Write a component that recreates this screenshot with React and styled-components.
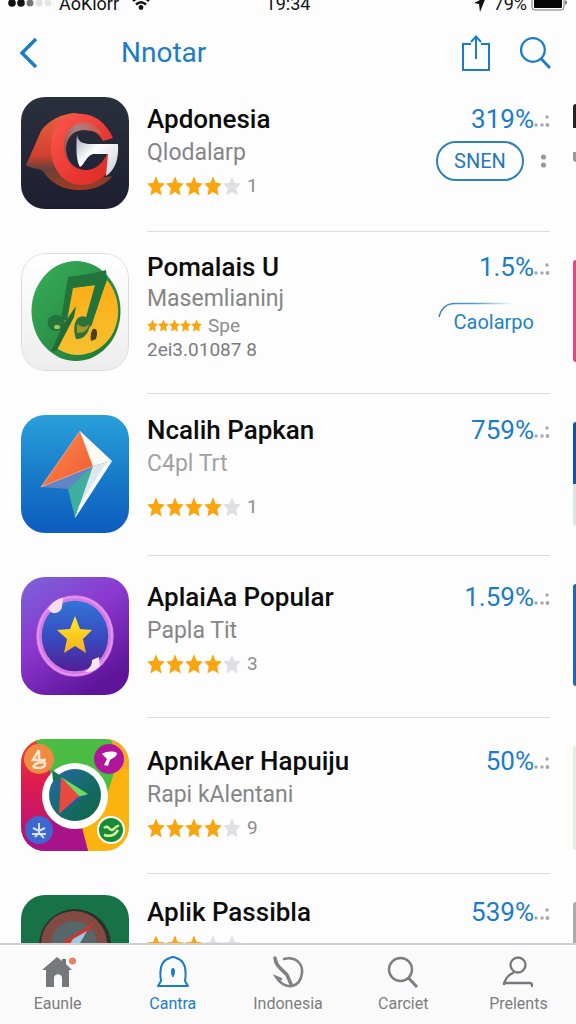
import React from 'react'
import styled, { createGlobalStyle } from 'styled-components'

const GlobalStyle = createGlobalStyle`
    * {
        box-sizing: border-box;
    }
    body {
        margin: 0;
        background-color: #fdfdfd;
        font-family: Roboto, "Liberation Sans", sans-serif;
    }
    button {
        font-family: inherit;
        background: none;
        border: none;
        padding: 0;
        cursor: pointer;
    }
`

const Screen = styled.div`
    display: flex;
    flex-direction: column;
    height: 100vh;
    overflow: hidden;
`

const StatusBar = styled.div`
    display: grid;
    grid-template-columns: 1fr auto 1fr;
    grid-template-rows: 12px;
    align-items: end;
    flex-shrink: 0;
    padding: 0 8px;
    font-size: 18px;
    line-height: 16px;
    color: #111;
`

const StatusGroup = styled.div`
    display: flex;
    align-items: flex-end;
    justify-content: ${props => props.$end ? "flex-end" : "flex-start"};
    gap: ${props => props.$end ? "4px" : "6px"};
`

const Header = styled.header`
    display: flex;
    align-items: center;
    flex-shrink: 0;
    height: 64px;
    padding: 17px 24px 0 18px;
    color: #1b7cc8;
`

const Heading = styled.h1`
    flex: 1;
    margin: 0 0 0 81px;
    font-size: 28px;
    font-weight: 400;
    line-height: 32px;
`

const IconButton = styled.button`
    display: flex;
    margin-left: ${props => props.$spaced ? "28px" : "0"};
    color: inherit;
`

const List = styled.main`
    flex: 1;
    min-height: 0;
    overflow: hidden;
`

const Row = styled.article`
    display: flex;
    padding-left: 21px;
`

const Artwork = styled.div`
    flex-shrink: 0;
    width: 108px;
    height: ${props => props.$height}px;
    margin: 21px 18px 23px 0;
    border-radius: 24px;
    overflow: hidden;

    svg {
        display: block;
        width: 100%;
        height: 100%;
    }
`

const Body = styled.div`
    display: flex;
    flex: 1;
    align-items: ${props => props.$top ? "flex-start" : "center"};
    padding: ${props => props.$top ? "21px 0" : "14px 0"};
    border-bottom: 1px solid #dcdcde;
`

const Content = styled.div`
    display: flex;
    flex: 1;
    align-items: flex-start;
    justify-content: space-between;
`

const Info = styled.div`
    padding-bottom: ${props => props.$tall ? "14px" : "4px"};
`

const Name = styled.h2`
    margin: 0;
    font-size: 26px;
    font-weight: 500;
    line-height: 34px;
    color: #0c0c0c;
    white-space: nowrap;
`

const Maker = styled.p`
    margin: 0 0 ${props => props.$loose ? "10px" : "0"};
    font-size: 23px;
    line-height: ${props => props.$compact ? "30px" : "34px"};
    color: ${props => props.$light ? "#a2a2a4" : "#858587"};
    white-space: nowrap;
`

const Rating = styled.div`
    display: flex;
    align-items: center;
    gap: 6px;
    height: ${props => props.$compact ? "24px" : "32px"};
    font-size: 19px;
    color: #8e8e90;
`

const Stars = styled.div`
    display: flex;
    gap: ${props => props.$compact ? "0" : "1px"};
`

const Meta = styled.p`
    margin: 0;
    font-size: 19px;
    line-height: 24px;
    color: #7c7c7e;
`

const Side = styled.div`
    display: flex;
    flex-direction: column;
    align-items: flex-end;
`

const Percent = styled.div`
    display: flex;
    align-items: center;
    height: 34px;
    font-size: 26px;
    color: #1b7cc8;
`

const Actions = styled.div`
    display: flex;
    align-items: center;
    gap: 16px;
    margin-top: 5px;
    padding-right: 3px;
`

const PillButton = styled.button`
    width: 88px;
    height: 40px;
    border: 2px solid #2f80bd;
    border-radius: 20px;
    font-size: 20px;
    color: #2878b8;
`

const TextButton = styled.button`
    position: relative;
    margin-top: 18px;
    padding: 8px 16px;
    font-size: 20px;
    line-height: 24px;
    color: #2582c0;
`

const Arc = styled.svg`
    position: absolute;
    top: 0;
    left: 0;
`

const Peek = styled.div`
    align-self: flex-start;
    flex-shrink: 0;
    width: 3px;
    height: ${props => props.$height}px;
    margin: 28px 0 0 23px;
    border-radius: 3px 0 0 3px;
    background: ${props => props.$fill};
`

const TabBar = styled.nav`
    display: flex;
    flex-shrink: 0;
    height: 81px;
    padding-top: 11px;
    border-top: 2px solid #cfcfd1;
    background-color: #fafafb;
`

const Tab = styled.a`
    display: flex;
    flex: 1;
    flex-direction: column;
    align-items: center;
    gap: 4px;
    font-size: 16px;
    line-height: 24px;
    text-decoration: none;
    color: ${props => props.$active ? "#1b7cc8" : "#7d7d80"};
`

const STAR = "M10 0.3 L12.9 6.7 L19.8 7.5 L14.7 12.3 L16.2 19.6 L10 16 L3.8 19.6 L5.3 12.3 L0.2 7.5 L7.1 6.7 Z"

const Star = ({ size, color }) => (
    <svg width={size} height={size + 2} viewBox="0 0 20 20" preserveAspectRatio="none">
        <path d={STAR} fill={color} />
    </svg>
)

const MoreDots = () => (
    <svg width="16" height="20" viewBox="0 0 16 20" fill="#a5a8ac" aria-hidden="true">
        <circle cx="13" cy="8" r="1.7" />
        <circle cx="2" cy="16" r="1.7" />
        <circle cx="8" cy="16" r="1.7" />
        <circle cx="13.5" cy="16" r="1.9" />
    </svg>
)

const LetterArt = () => (
    <svg viewBox="0 0 108 112" preserveAspectRatio="none">
        <defs>
            <linearGradient id="nightBg" x1="0" y1="0" x2="0" y2="1">
                <stop offset="0" stopColor="#2b303d" />
                <stop offset="1" stopColor="#1d1f30" />
            </linearGradient>
            <linearGradient id="tail" x1="0" y1="0" x2="0" y2="1">
                <stop offset="0" stopColor="#e8623f" />
                <stop offset="0.55" stopColor="#d3402f" />
                <stop offset="0.72" stopColor="#6a4038" />
                <stop offset="1" stopColor="#a13b22" />
            </linearGradient>
            <linearGradient id="ring" x1="0" y1="0" x2="1" y2="1">
                <stop offset="0" stopColor="#fb5a50" />
                <stop offset="0.6" stopColor="#e93731" />
                <stop offset="1" stopColor="#d82a22" />
            </linearGradient>
            <linearGradient id="lip" x1="0" y1="1" x2="1" y2="0">
                <stop offset="0" stopColor="#8d3a40" />
                <stop offset="0.6" stopColor="#a8807f" />
                <stop offset="1" stopColor="#e0493c" />
            </linearGradient>
            <linearGradient id="blade" x1="0" y1="0" x2="1" y2="1">
                <stop offset="0" stopColor="#a9aebb" />
                <stop offset="0.4" stopColor="#ffffff" />
                <stop offset="1" stopColor="#c9cdd8" />
            </linearGradient>
        </defs>
        <rect width="108" height="112" fill="url(#nightBg)" />
        <path d="M57 16 C40 16 27 24 20 34 L5 68 C10 72 17 71 22 74 C29 86 42 93 59 93 C74 93 86 87 91 79 L60 84 L34 60 L34 34 Z" fill="url(#tail)" />
        <path d="M92 41 C84 23 70 15 54 17 C38 20 29 34 30 52 C31 74 43 87 60 88 C77 88 91 77 94 58 L86 57 C82 66 74 74 63 73 C53 72 45 64 45 52 C45 41 52 33 63 33 C72 33 78 36 82 44 Z" fill="url(#ring)" />
        <path d="M82 38 C76 29 70 25 62 25 C50 27 43 37 43 49 C43 60 48 68 55 71 C48 66 45 60 45 52 C45 41 52 33 63 33 C72 33 78 36 82 38 Z" fill="url(#lip)" />
        <path d="M56 38 C57 45 62 47 70 47 L97 47 C98 62 94 73 85 79 L87 57 L72 57 C65 59 64 67 59 70 C55 65 55 48 56 38 Z" fill="url(#blade)" />
    </svg>
)

const MusicArt = () => (
    <svg viewBox="0 0 108 118" preserveAspectRatio="none">
        <defs>
            <linearGradient id="leaf" x1="0" y1="0" x2="1" y2="1">
                <stop offset="0" stopColor="#38b05a" />
                <stop offset="1" stopColor="#1f7436" />
            </linearGradient>
            <linearGradient id="amber" x1="0" y1="0" x2="0" y2="1">
                <stop offset="0" stopColor="#fbae17" />
                <stop offset="1" stopColor="#f6c02e" />
            </linearGradient>
            <linearGradient id="paper" x1="0" y1="0" x2="0" y2="1">
                <stop offset="0" stopColor="#ffffff" />
                <stop offset="1" stopColor="#ededee" />
            </linearGradient>
        </defs>
        <rect x="0.5" y="0.5" width="107" height="117" rx="24" fill="url(#paper)" stroke="#dcdcdc" />
        <ellipse cx="55" cy="58" rx="44.500" ry="50" fill="url(#leaf)" />
        <path d="M86 27 C94 37 98 49 97 62 C95 86 77 102 56 102 C49 102 41 99 36 95 L56 62 L70 68 Z" fill="url(#amber)" />
        <path d="M50 35 L75 32 L66 66 L40 90 Z" fill="url(#amber)" />
        <path d="M47 24 L74 20 L85 17 L86 26 L70 74 L64 68 L74 32 L52 35 L46 68 L40 66 Z" fill="#23743a" />
        <ellipse cx="35" cy="70" rx="8.500" ry="8" fill="#24733a" />
        <path d="M55 53 L53 64 L36 97 L30 99 L42 72 Z" fill="#226b36" />
        <path d="M56 66 C61 60 70 64 69 73 C67 81 62 87 55 86 C53 80 52 72 56 66 Z" fill="#2b7339" />
        <path d="M56 71 C61 75 66 74 68 71 C67 77 63 80 56 80 Z" fill="#a8962c" />
        <ellipse cx="36" cy="74" rx="3" ry="2" fill="#a4c764" />
        <path d="M72 76 C76 75 77 79 75 86 L70 88 C69 84 70 78 72 76 Z" fill="#493e16" />
    </svg>
)

const KiteArt = () => (
    <svg viewBox="0 0 108 118" preserveAspectRatio="none">
        <defs>
            <linearGradient id="sky" x1="0" y1="0" x2="0" y2="1">
                <stop offset="0" stopColor="#2aa0da" />
                <stop offset="0.5" stopColor="#187cca" />
                <stop offset="1" stopColor="#0d5cbe" />
            </linearGradient>
            <linearGradient id="orangeFold" x1="0" y1="0" x2="1" y2="1">
                <stop offset="0" stopColor="#ff8a52" />
                <stop offset="1" stopColor="#ef5a2c" />
            </linearGradient>
        </defs>
        <rect width="108" height="118" fill="url(#sky)" />
        <path d="M20 72 L72 51 L65 66 L47 74 Z" fill="#6186c4" />
        <path d="M59 16 L20 72 L72 51 Z" fill="url(#orangeFold)" stroke="#f0b48e" strokeWidth="0.8" />
        <path d="M72 51 L47 74 L54 103 Z" fill="#3daf9c" />
        <path d="M59 16 L91 46 L72 51 Z" fill="#fdfaf4" />
        <path d="M72 51 L91 46 L54 103 Z" fill="#dce8ea" />
        <path d="M91 46 L54 103 L58 91 L85 48 Z" fill="#f7fbfb" />
    </svg>
)

const StarArt = () => (
    <svg viewBox="0 0 108 118" preserveAspectRatio="none">
        <defs>
            <linearGradient id="violet" x1="0" y1="0" x2="0.6" y2="1">
                <stop offset="0" stopColor="#7b64dc" />
                <stop offset="0.5" stopColor="#8b37cd" />
                <stop offset="1" stopColor="#5f149b" />
            </linearGradient>
            <linearGradient id="orb" x1="0" y1="0" x2="0" y2="1">
                <stop offset="0" stopColor="#3178d8" />
                <stop offset="0.55" stopColor="#3948bd" />
                <stop offset="1" stopColor="#551c91" />
            </linearGradient>
            <linearGradient id="gold" x1="0" y1="0" x2="0" y2="1">
                <stop offset="0" stopColor="#ffee22" />
                <stop offset="1" stopColor="#f6ad20" />
            </linearGradient>
        </defs>
        <rect width="108" height="118" fill="url(#violet)" />
        <ellipse cx="54" cy="59" rx="36" ry="38" fill="url(#orb)" stroke="#d579e6" strokeWidth="5.500" />
        <ellipse cx="54" cy="59" rx="37" ry="39" fill="none" stroke="#e294ec" strokeWidth="2" />
        <path d="M27 32 C31 25 37 21 42 21 C41 29 42 35 34 36 C31 37 29 34 27 32 Z" fill="#fbdcf8" />
        <path d="M71 83 L78 80 L79 89 C74 94 69 95 64 95 C69 91 71 88 71 83 Z" fill="#fce5fb" />
        <path d="M54 39 L59 52 L71 53 L62 62 L65 76 L54 69 L43 76 L46 62 L36 53 L49 52 Z" fill="url(#gold)" />
    </svg>
)

const PlayArt = () => (
    <svg viewBox="0 0 108 112" preserveAspectRatio="none">
        <defs>
            <linearGradient id="crimson" x1="0" y1="0" x2="0" y2="1">
                <stop offset="0" stopColor="#e8442d" />
                <stop offset="0.4" stopColor="#dd1b50" />
                <stop offset="1" stopColor="#b0127f" />
            </linearGradient>
            <linearGradient id="lens" x1="0" y1="0" x2="1" y2="1">
                <stop offset="0" stopColor="#2766ab" />
                <stop offset="0.5" stopColor="#176b6c" />
                <stop offset="1" stopColor="#0e6445" />
            </linearGradient>
        </defs>
        <rect width="108" height="112" fill="#fbb40f" />
        <path d="M0 0 H40 L54 60 L67 112 H0 Z" fill="url(#crimson)" />
        <path d="M14 0 H104 L84 62 L40 56 Z" fill="#4bbd42" />
        <path d="M0 112 L10 86 L56 78 L67 112 Z" fill="#a91389" />
        <path d="M90 0 H108 V30 H98 Z" fill="#fba526" />
        <circle cx="54" cy="57" r="33" fill="#fff" />
        <circle cx="54" cy="56" r="26" fill="url(#lens)" />
        <path d="M31 31 L43 39 L32 42 Z" fill="#167658" />
        <path d="M40 38 L60 56 L38 75 Z" fill="#e84b3d" />
        <path d="M40 38 L67 55 L59 58 Z" fill="#68df62" />
        <path d="M38 75 L63 56 L57 58 Z" fill="#2c55b8" />
        <circle cx="18" cy="20" r="15" fill="#f18a43" />
        <path d="M18 11 V22 M18 11 L12 21 H25 M12 28 C18 30 25 29 24 24 C20 22 14 24 12 28" fill="none" stroke="#ffe4cc" strokeWidth="2.500" />
        <circle cx="88" cy="20" r="15" fill="#b0169b" />
        <path d="M81 15 C86 12 92 12 96 14 C96 18 91 19 89 21 L87 27 L83 26 L86 20 Z" fill="#fff" />
        <circle cx="18" cy="91" r="14" fill="#3f65cf" />
        <path d="M18 84 V95 M12 89 L18 92 L24 89 M11 95 H25 M14 98 L18 94 L23 99" fill="none" stroke="#d4e2ff" strokeWidth="2" />
        <circle cx="90" cy="91" r="14" fill="#fff" />
        <circle cx="90" cy="91" r="12" fill="#168c38" />
        <path d="M83 89 C87 85 88 91 91 91 C94 90 95 86 98 87 M83 96 C89 98 94 96 97 91" fill="none" stroke="#d9f6a0" strokeWidth="2.500" />
    </svg>
)

const CompassArt = () => (
    <svg viewBox="0 0 108 118" preserveAspectRatio="none">
        <rect width="108" height="118" fill="#177248" />
        <circle cx="54" cy="50" r="36" fill="#29302d" />
        <circle cx="53" cy="49" r="33" fill="#824b42" />
        <circle cx="53" cy="49" r="23" fill="#566669" />
        <path d="M74 27 L44 45 L34 60 H48 Z" fill="#c9392b" />
        <path d="M66 36 L52 44 L42 60 H52 Z" fill="#9bcbe4" />
    </svg>
)

const apps = [
    {
        name: "Apdonesia", maker: "Qlodalarp", stars: 4, note: "1", percent: "319%",
        art: LetterArt, height: 112, action: "pill",
        peek: { fill: "linear-gradient(#222 24px, transparent 24px 48px, #999 48px)", height: 58 },
    },
    {
        name: "Pomalais U", maker: "Masemlianinj", stars: 5, note: "Spe", meta: "2ei3.01087 8", percent: "1.5%",
        art: MusicArt, height: 118, action: "text", compact: true,
        peek: { fill: "#e6457f", height: 102 },
    },
    {
        name: "Ncalih Papkan", maker: "C4pl Trt", stars: 4, note: "1", percent: "759%",
        art: KiteArt, height: 118, light: true, loose: true,
        peek: { fill: "linear-gradient(#1253a8 62px, #dce6e8 62px)", height: 104 },
    },
    {
        name: "AplaiAa Popular", maker: "Papla Tit", stars: 4, note: "3", percent: "1.59%",
        art: StarArt, height: 118,
        peek: { fill: "#2463bc", height: 102 },
    },
    {
        name: "ApnikAer Hapuiju", maker: "Rapi kAlentani", stars: 4, note: "9", percent: "50%",
        art: PlayArt, height: 112,
        peek: { fill: "#dff0df", height: 104 },
    },
    {
        name: "Aplik Passibla", stars: 3, percent: "539%",
        art: CompassArt, height: 118, top: true,
        peek: { fill: "#aaabae", height: 104 },
    },
]

const AppRow = ({ app }) => {
    const Art = app.art
    const size = app.compact ? 11 : 18
    return (
        <Row>
            <Artwork $height={app.height}><Art /></Artwork>
            <Body $top={app.top}>
                <Content>
                    <Info $tall={app.height > 112}>
                        <Name>{app.name}</Name>
                        {app.maker && (
                            <Maker $compact={app.compact} $light={app.light} $loose={app.loose}>{app.maker}</Maker>
                        )}
                        <Rating $compact={app.compact}>
                            <Stars $compact={app.compact}>
                                {[0, 1, 2, 3, 4].map(i => (
                                    <Star key={i} size={size} color={i < app.stars ? "#faa50e" : "#dfdfe4"} />
                                ))}
                            </Stars>
                            {app.note}
                        </Rating>
                        {app.meta && <Meta>{app.meta}</Meta>}
                    </Info>
                    <Side>
                        <Percent>{app.percent}<MoreDots /></Percent>
                        {app.action === "pill" && (
                            <Actions>
                                <PillButton>SNEN</PillButton>
                                <svg width="7" height="16" viewBox="0 0 7 16" fill="#9a9a9c">
                                    <circle cx="3.500" cy="4" r="2.600" />
                                    <circle cx="3.500" cy="12" r="2.600" />
                                </svg>
                            </Actions>
                        )}
                        {app.action === "text" && (
                            <TextButton>
                                <Arc width="80" height="18" viewBox="0 0 80 18" fill="none">
                                    <defs>
                                        <linearGradient id="fade" gradientUnits="userSpaceOnUse" x1="0" y1="0" x2="76" y2="0">
                                            <stop offset="0" stopColor="#3a86bd" />
                                            <stop offset="0.5" stopColor="#5a9cc9" />
                                            <stop offset="1" stopColor="#ffffff" />
                                        </linearGradient>
                                    </defs>
                                    <path d="M1 15 C3 7 8 1.500 17 1.500 H76" stroke="url(#fade)" strokeWidth="1.500" />
                                </Arc>
                                Caolarpo
                            </TextButton>
                        )}
                    </Side>
                </Content>
            </Body>
            <Peek $fill={app.peek.fill} $height={app.peek.height} />
        </Row>
    )
}

const HomeIcon = () => (
    <svg width="36" height="32" viewBox="0 0 36 32">
        <path d="M17 1 L22 5 V3 H26 V8 L32 14 H29 V31 H22 V22 C22 17 14 17 14 22 V31 H6 V14 H2 Z" fill="#77787b" />
        <circle cx="32.500" cy="5" r="3.500" fill="#e5835b" />
    </svg>
)

const BellIcon = () => (
    <svg width="36" height="32" viewBox="0 0 36 32" fill="none" stroke="#1b7cc8" strokeWidth="2">
        <path d="M3 30 H33 L30 25 C32 12 29 4 21 2 Q18 0 15 2 C7 4 4 12 6 25 Z" strokeLinejoin="round" />
        <path d="M18 12 C15 14 17 20 18 21 C19 19 21 14 18 12 Z" fill="#1b7cc8" strokeWidth="1" />
    </svg>
)

const SwirlIcon = () => (
    <svg width="36" height="32" viewBox="0 0 36 32" fill="none" stroke="#808184" strokeWidth="2.500" strokeLinecap="round">
        <path d="M14 3 C25 0 33 7 32 17 C31 25 27 29 22 30 C15 31 10 27 6 21 L11 23" />
        <path d="M5 2 C6 11 12 13 17 19 L21 28" strokeWidth="3.500" />
    </svg>
)

const LoupeIcon = ({ size, weight }) => (
    <svg width={size} height={size} viewBox="0 0 32 32" fill="none" stroke="currentColor" strokeWidth={weight}>
        <circle cx="13.500" cy="13.500" r="11.500" />
        <path d="M21.500 22 L30 31" strokeWidth={weight + 0.5} />
    </svg>
)

const PersonIcon = () => (
    <svg width="36" height="32" viewBox="0 0 36 32" fill="none" stroke="#77787b" strokeWidth="2.300" strokeLinecap="round">
        <circle cx="18" cy="9" r="7.500" />
        <path d="M13 17 C8 19 5 23 4 29 V27 H30 Q32 27 32 30" />
    </svg>
)

const tabs = [
    { label: "Eaunle", icon: <HomeIcon /> },
    { label: "Cantra", icon: <BellIcon />, active: true },
    { label: "Indonesia", icon: <SwirlIcon /> },
    { label: "Carciet", icon: <LoupeIcon size={32} weight={2.4} /> },
    { label: "Prelents", icon: <PersonIcon /> },
]

export default function App() {
    return (
        <Screen>
            <GlobalStyle />
            <StatusBar>
                <StatusGroup>
                    <svg width="45" height="14" viewBox="0 0 45 14">
                        <circle cx="4" cy="5" r="3.800" fill="#111" />
                        <circle cx="13" cy="5" r="3.800" fill="#111" />
                        <circle cx="22" cy="5" r="3.500" fill="#777" />
                        <circle cx="31" cy="5" r="3.500" fill="#e0e0e0" />
                        <circle cx="40" cy="5" r="3.500" fill="#e6e6e6" />
                    </svg>
                    <span>AoKlorr</span>
                    <svg width="26" height="16" viewBox="-6 0 26 16" fill="none" stroke="#111" strokeWidth="2.500">
                        <path d="M2 5 Q10 -2 18 5 M5 8.500 Q10 4 15 8.500" />
                        <circle cx="10" cy="11.500" r="1.200" fill="#111" />
                    </svg>
                </StatusGroup>
                <span>19:34</span>
                <StatusGroup $end>
                    <svg width="18" height="16" viewBox="0 0 18 16">
                        <path d="M2 7 L14 1 L8 16 L7 8 Z" fill="#111" />
                    </svg>
                    <span>79%</span>
                    <svg width="37" height="16" viewBox="0 0 37 16">
                        <rect x="1" y="-4" width="32" height="18" rx="3" fill="#fff" stroke="#777" />
                        <rect x="3" y="-2" width="28" height="14" rx="1" fill="#050505" />
                        <path d="M34.500 4 V9 Q37 6.500 34.500 4" fill="#222" />
                    </svg>
                </StatusGroup>
            </StatusBar>
            <Header>
                <IconButton aria-label="Back">
                    <svg width="22" height="34" viewBox="0 0 22 34" fill="none" stroke="currentColor" strokeWidth="3.500">
                        <path d="M18 3 L4 17 L18 31" />
                    </svg>
                </IconButton>
                <Heading>Nnotar</Heading>
                <IconButton aria-label="Share">
                    <svg width="30" height="38" viewBox="0 0 30 38" fill="none" stroke="currentColor" strokeWidth="2">
                        <path d="M10 10 H2 V36 H28 V10 H20" />
                        <path d="M15 25 V3 M10 8 L15 2.500 L20 8" />
                    </svg>
                </IconButton>
                <IconButton $spaced aria-label="Search">
                    <LoupeIcon size={33} weight={2.2} />
                </IconButton>
            </Header>
            <List>
                {apps.map(app => <AppRow key={app.name} app={app} />)}
            </List>
            <TabBar>
                {tabs.map(tab => (
                    <Tab key={tab.label} href="#" $active={tab.active}>
                        {tab.icon}
                        {tab.label}
                    </Tab>
                ))}
            </TabBar>
        </Screen>
    )
}
